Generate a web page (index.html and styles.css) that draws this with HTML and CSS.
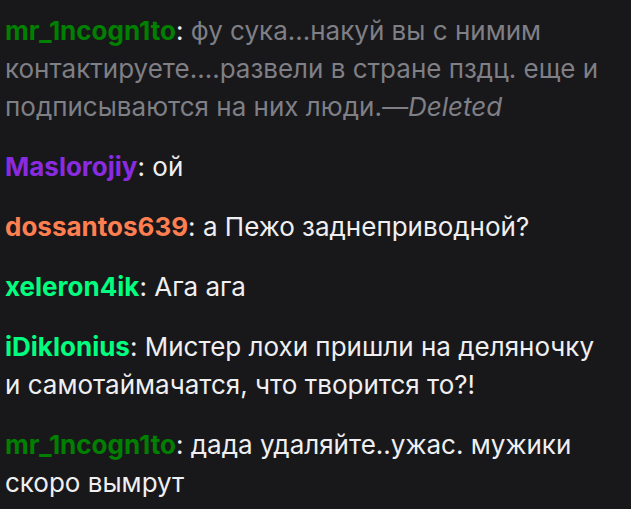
FILE: index.html
```html
<!DOCTYPE html>
<html lang="ru">
<head>
<meta charset="utf-8">
<link rel="stylesheet" href="styles.css">
</head>
<body>
<div class="chat">
  <div class="line"><span class="name green">mr_1ncogn1to</span><span class="colon">: </span><span class="deleted">фу сука...накуй вы с нимим контактируете....развели в стране пздц. еще и подписываются на них люди.<i>—Deleted</i></span></div>
  <div class="line"><span class="name purple">Maslorojiy</span><span class="colon">: </span>ой</div>
  <div class="line"><span class="name coral">dossantos639</span><span class="colon">: </span>а Пежо заднеприводной?</div>
  <div class="line"><span class="name spring">xeleron4ik</span><span class="colon">: </span>Ага ага</div>
  <div class="line"><span class="name spring">iDiklonius</span><span class="colon">: </span>Мистер лохи пришли на деляночку и самотаймачатся, что творится то?!</div>
  <div class="line"><span class="name green">mr_1ncogn1to</span><span class="colon">: </span>дада удаляйте..ужас. мужики скоро вымрут</div>
</div>
</body>
</html>
```
FILE: styles.css
```css
html, body {
  margin: 0;
  padding: 0;
  background: #18181b;
}
.chat {
  padding: 1px 24px 0 5px;
  font-family: Inter, "Noto Sans", sans-serif;
  font-size: 26px;
  line-height: 38px;
  color: #efeff1;
}
.line {
  padding: 11px 0;
}
.name {
  font-weight: 700;
}
.colon {
  color: #efeff1;
}
.deleted {
  color: #7f7f86;
}
.deleted i {
  font-style: italic;
}
.green { color: #008000; }
.purple { color: #8a2be2; }
.coral { color: #ff7f50; }
.spring { color: #00ff7f; }
```
